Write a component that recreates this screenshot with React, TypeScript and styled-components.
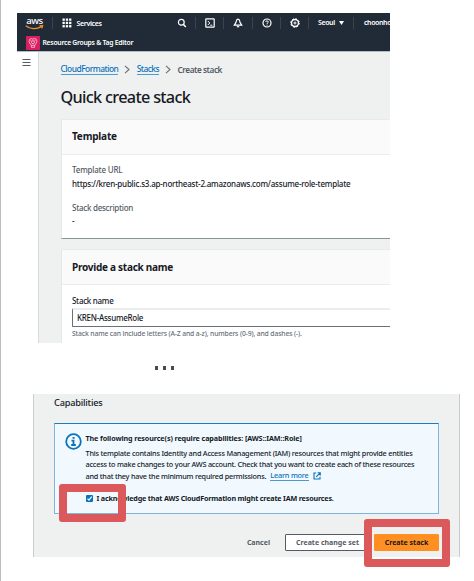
import React from "react";
import styled, { createGlobalStyle } from "styled-components";

const Global = createGlobalStyle`
  * { box-sizing: border-box; }
  body { margin: 0; background: #fff; font-family: "Noto Sans", "Open Sans", sans-serif; }
`;

const Page = styled.main`
  position: relative;
  width: 474px;
  height: 581px;
  padding-top: 13px;
  border-left: 1px solid #b9bdbd;
  overflow: hidden;
`;

const Text = styled.span<{ $size: number; $weight?: number; $color?: string; $ls?: number }>`
  font-size: ${(p) => p.$size}px;
  font-weight: ${(p) => p.$weight ?? 500};
  color: ${(p) => p.$color ?? "#16191f"};
  letter-spacing: ${(p) => p.$ls ?? 0}px;
  white-space: nowrap;
`;

const Console = styled.section`
  width: 372.5px;
  height: 330px;
  margin-left: 16px;
  overflow: hidden;
  display: flex;
  flex-direction: column;
`;

const TopNav = styled.header`
  flex: none;
  height: 39px;
  background: #212b37;
  border-bottom: 1px solid #b4bcc4;
`;

const NavRow = styled.div`
  height: 19px;
  display: flex;
  align-items: center;
  white-space: nowrap;
`;

const ServiceRow = styled(NavRow)`
  padding: 2px 0 0 9px;
  gap: 2.5px;
`;

const NavCell = styled.div<{ $w: number; $pad?: number; $divider?: boolean }>`
  flex: none;
  width: ${(p) => p.$w}px;
  height: 12px;
  padding-left: ${(p) => p.$pad ?? 0}px;
  display: flex;
  align-items: center;
  justify-content: ${(p) => (p.$pad === undefined ? "center" : "flex-start")};
  gap: 4.5px;
  border-right: ${(p) => (p.$divider === false ? "0" : "1px solid #3a4450")};
`;

const Body = styled.div`
  flex: 1;
  min-height: 0;
  display: flex;
`;

const Rail = styled.aside`
  flex: none;
  width: 22px;
  padding: 7px 0 0 5px;
  border-right: 1px solid #d5dbdb;
  svg { display: block; }
`;

const Content = styled.div`
  flex: 1;
  min-width: 0;
  padding: 8px 0 0 21.5px;
  background: #eff1f1;
`;

const Crumbs = styled.nav`
  height: 18px;
  display: flex;
  align-items: center;
  gap: 6.2px;
`;

const Link = styled(Text).attrs({ as: "a" })`
  color: #0972bb;
  border-bottom: 1px solid #4c9ad0;
  line-height: 10px;
`;

const Title = styled.h1`
  height: 41px;
  margin: 0;
  padding-bottom: 4px;
  display: flex;
  align-items: center;
`;

const Card = styled.section<{ $h: number }>`
  height: ${(p) => p.$h}px;
  margin-bottom: 10px;
  background: #fff;
  border-left: 1px solid #e3e8e8;
  border-top: 1px solid #e7ebeb;
  border-bottom: 1px solid #879596;
`;

const CardHeader = styled.div<{ $lift?: number }>`
  height: 35px;
  padding: 0 0 ${(p) => p.$lift ?? 0}px 10.5px;
  display: flex;
  align-items: center;
  background: #fafafa;
  border-bottom: 1px solid #eaeded;
`;

const Field = styled.div<{ $top: number }>`
  padding: ${(p) => p.$top}px 0 0 10.5px;
  display: flex;
  flex-direction: column;
  & > span { line-height: 13.5px; }
`;

const Input = styled.div`
  height: 19px;
  padding-left: 4px;
  display: flex;
  align-items: center;
  border: 1px solid #687078;
  border-top: 2px solid #eaeded;
  border-right: 0;
  border-radius: 1px 0 0 1px;
  margin-bottom: 0.5px;
`;

const Ellipsis = styled.div`
  height: 51px;
  padding: 23px 0 0 154px;
  display: flex;
  gap: 5px;
`;

const Dot = styled.i`
  width: 3px;
  height: 4px;
  background: #4b4b4b;
`;

const Review = styled.section`
  width: 427px;
  height: 163px;
  margin-left: 32px;
  padding: 0 20px;
  background: #eff1f1;
  border-left: 1px solid #c9cdcd;
  border-right: 1px solid #c9cdcd;
`;

const SectionTitle = styled.h2`
  height: 29px;
  margin: 0;
  padding-top: 2px;
  display: flex;
  align-items: flex-start;
  line-height: 13px;
`;

const Alert = styled.div`
  height: 91px;
  padding: 7px 0 0 10px;
  display: flex;
  gap: 3.5px;
  background: #f1f9ff;
  border: 1px solid #7db5dc;
  border-top-color: #1c7cbf;
  & > svg { flex: none; margin-top: 2px; }
`;

const AlertBody = styled.div`
  display: flex;
  flex-direction: column;
`;

const Line = styled.div<{ $h: number }>`
  height: ${(p) => p.$h}px;
  display: flex;
  align-items: center;
  gap: 4px;
`;

const Check = styled.span`
  width: 7px;
  height: 7px;
  background: #0972bb;
  border-radius: 1px;
  display: flex;
`;

const Actions = styled.div`
  padding-top: 20px;
  display: flex;
  justify-content: flex-end;
  align-items: center;
`;

const Button = styled.button<{ $w: number; $primary?: boolean }>`
  width: ${(p) => p.$w}px;
  height: 17px;
  padding: 0;
  margin-left: ${(p) => (p.$primary ? 4 : 15)}px;
  display: flex;
  align-items: center;
  justify-content: center;
  font-family: inherit;
  background: ${(p) => (p.$primary ? "#ff8f21" : "#fff")};
  border: 1px solid ${(p) => (p.$primary ? "#ff8f21" : "#545b64")};
  border-radius: 1px;
`;

const Highlight = styled.div<{ $x: number; $y: number; $w: number; $h: number }>`
  position: absolute;
  left: ${(p) => p.$x}px;
  top: ${(p) => p.$y}px;
  width: ${(p) => p.$w}px;
  height: ${(p) => p.$h}px;
  border: 8px solid #db595b;
  border-radius: 3px;
`;

const AwsLogo = styled.div`
  height: 12px;
  display: flex;
  flex-direction: column;
  align-items: center;
  & > span { line-height: 8px; }
  svg { flex: none; }
`;

const Chevron = () => (
  <svg width="6" height="9" viewBox="0 0 6 9" fill="none" stroke="#687078" strokeWidth="1.1">
    <path d="M1 .8 5 4.5 1 8.2" />
  </svg>
);

const Icon = ({ children }: { children: React.ReactNode }) => (
  <svg width="10" height="10" viewBox="0 0 10 10" fill="none" stroke="#fff" strokeWidth="1.2">
    {children}
  </svg>
);

export default function App() {
  return (
    <>
      <Global />
      <Page>
        <Console>
          <TopNav>
            <NavRow>
              <NavCell $w={36} $pad={8}>
                <AwsLogo>
                  <Text $size={9.6} $weight={500} $color="#fff" $ls={-0.4}>aws</Text>
                  <svg width="19" height="5" viewBox="0 0 19 5" fill="none" stroke="#f4932a" strokeWidth="1.3">
                    <path d="M.8.7C5 4.2 11.5 4.5 16.2 1.8M14.5.8 17.6.7 16.8 3.3" />
                  </svg>
                </AwsLogo>
              </NavCell>
              <NavCell $w={118} $pad={9} $divider={false}>
                <svg width="10" height="10" viewBox="0 0 10 10" fill="#fff">
                  {[0.5, 3.8, 7.1].map((y) => [0.5, 3.8, 7.1].map((x) => (
                    <rect key={`${x}-${y}`} x={x} y={y} width="2.3" height="2.3" />
                  )))}
                </svg>
                <Text $size={7.1} $weight={600} $color="#fff" $ls={-0.4}>Services</Text>
              </NavCell>
              <NavCell $w={25} $pad={6}>
                <Icon><circle cx="4.3" cy="4.2" r="2.9" /><path d="m6.5 6.5 2.3 2.4" strokeWidth="1.5" /></Icon>
              </NavCell>
              <NavCell $w={28}>
                <Icon><rect x=".8" y=".8" width="8.4" height="8.4" rx=".5" /><path d="m2.8 3 2 2-2 2M5.3 7.2h2" strokeWidth="1" /></Icon>
              </NavCell>
              <NavCell $w={29}>
                <Icon><path d="M5 1.2C3.2 1.4 3.3 3.2 3 4.4L1.3 7.1h7.4L7 4.4C6.7 3.2 6.8 1.4 5 1.2Z" /><path d="M3.8 8.7h2.4" /></Icon>
              </NavCell>
              <NavCell $w={28}>
                <Icon><circle cx="5" cy="5" r="4" /><path d="M3.7 4C3.7 2.5 6.3 2.5 6.3 4 6.3 5 5 4.7 5 6M5 6.7v1" strokeWidth="1" /></Icon>
              </NavCell>
              <NavCell $w={28}>
                <Icon><circle cx="5" cy="5" r="3.5" strokeWidth="1.4" /><circle cx="5" cy="5" r="1" strokeWidth="1" /><circle cx="5" cy="5" r="4.3" strokeDasharray="1.6 1.777" strokeWidth="1" /></Icon>
              </NavCell>
              <NavCell $w={45} $pad={9}>
                <Text $size={7} $weight={600} $color="#fff" $ls={-0.4}>Seoul</Text>
                <svg width="5" height="4" viewBox="0 0 5 4" fill="#fff"><path d="M0 0h5L2.5 4Z" /></svg>
              </NavCell>
              <NavCell $w={50} $pad={10} $divider={false}>
                <Text $size={7} $weight={600} $color="#fff" $ls={-0.4}>choonho</Text>
              </NavCell>
            </NavRow>
            <ServiceRow>
              <svg width="14" height="14" viewBox="0 0 14 14">
                <rect width="14" height="14" fill="#d6205f" />
                <g fill="none" stroke="#ffb8d2" strokeWidth=".9">
                  <path d="M3.7 3.2 5.2 2.6 7 3.2 8.8 2.6 10.3 3.2 10.9 5.5 10 7.8 8.7 9v2.3H5.3V9L4 7.8 3.1 5.5Z" />
                  <circle cx="7" cy="6.2" r="1.5" /><path d="M4.5 4.7h1M8.5 4.7h1M5.3 9.3h3.4" />
                </g>
              </svg>
              <Text $size={6.8} $weight={600} $color="#fff" $ls={-0.26}>Resource Groups &amp; Tag Editor</Text>
            </ServiceRow>
          </TopNav>
          <Body>
            <Rail>
              <svg width="9" height="8" viewBox="0 0 9 8" stroke="#545b64" strokeWidth="1"><path d="M.5.5h8M.5 3.5h8M.5 6.5h8" /></svg>
            </Rail>
            <Content>
              <Crumbs>
                <Link $size={8.4} $ls={-0.5}>CloudFormation</Link>
                <Chevron />
                <Link $size={8.4} $ls={-0.5}>Stacks</Link>
                <Chevron />
                <Text $size={8.2} $weight={600} $color="#545b64" $ls={-0.42}>Create stack</Text>
              </Crumbs>
              <Title><Text $size={16.3} $ls={-0.7}>Quick create stack</Text></Title>
              <Card $h={120}>
                <CardHeader $lift={2}><Text $size={10} $weight={700} $ls={-0.2}>Template</Text></CardHeader>
                <Field $top={8}>
                  <Text $size={8} $color="#545b64" $ls={-0.2}>Template URL</Text>
                  <Text $size={8} $ls={-0.22}>https://kren-public.s3.ap-northeast-2.amazonaws.com/assume-role-template</Text>
                </Field>
                <Field $top={10.5}>
                  <Text $size={8} $color="#545b64" $ls={-0.26}>Stack description</Text>
                  <Text $size={8}>-</Text>
                </Field>
              </Card>
              <Card $h={120}>
                <CardHeader><Text $size={10} $weight={700} $ls={-0.26}>Provide a stack name</Text></CardHeader>
                <Field $top={9}>
                  <Text $size={8} $ls={-0.28}>Stack name</Text>
                  <Input><Text $size={8} $ls={-0.27}>KREN-AssumeRole</Text></Input>
                  <Text $size={6.8} $color="#687078" $ls={-0.14}>Stack name can include letters (A-Z and a-z), numbers (0-9), and dashes (-).</Text>
                </Field>
              </Card>
            </Content>
          </Body>
        </Console>
        <Ellipsis><Dot /><Dot /><Dot /></Ellipsis>
        <Review>
          <SectionTitle><Text $size={9.2} $ls={-0.2}>Capabilities</Text></SectionTitle>
          <Alert>
            <svg width="17" height="17" viewBox="0 0 17 17" fill="none" stroke="#0972bb" strokeWidth="1.8">
              <circle cx="8.5" cy="8.5" r="7.3" />
              <path d="M6.5 7.6h2V12M6.2 12h4.6M7.6 4.9h2" />
            </svg>
            <AlertBody>
              <Line $h={14}><Text $size={7.2} $weight={700} $ls={-0.11}>The following resource(s) require capabilities: [AWS::IAM::Role]</Text></Line>
              <Line $h={2} />
              <Line $h={11.5}><Text $size={7.3} $ls={-0.225}>This template contains Identity and Access Management (IAM) resources that might provide entities</Text></Line>
              <Line $h={11.5}><Text $size={7.3} $ls={-0.225}>access to make changes to your AWS account. Check that you want to create each of these resources</Text></Line>
              <Line $h={11.5}>
                <Text $size={7.3} $ls={-0.225}>and that they have the minimum required permissions.</Text>
                <Link $size={7.3} $ls={-0.2}>Learn more</Link>
                <svg width="8" height="8" viewBox="0 0 8 8" fill="none" stroke="#0972bb" strokeWidth="1.1"><path d="M3.2 1H1v6h6V4.8M4.6.7h2.7v2.7M7.2.8 3.2 4.8" /></svg>
              </Line>
              <Line $h={11} />
              <Line $h={11}>
                <Check><svg width="7" height="7" viewBox="0 0 7 7" fill="none" stroke="#fff" strokeWidth="1.2"><path d="m1.5 3.6 1.5 1.5 2.7-3.5" /></svg></Check>
                <Text $size={7.2} $weight={700} $ls={-0.19}>I acknowledge that AWS CloudFormation might create IAM resources.</Text>
              </Line>
            </AlertBody>
          </Alert>
          <Actions>
            <Text $size={7} $weight={700} $color="#545b64">Cancel</Text>
            <Button $w={85}><Text $size={7} $weight={700} $color="#545b64">Create change set</Text></Button>
            <Button $w={65} $primary><Text $size={7} $weight={700}>Create stack</Text></Button>
          </Actions>
        </Review>
        <Highlight $x={58} $y={484} $w={67} $h={38} />
        <Highlight $x={363} $y={519} $w={86} $h={48} />
      </Page>
    </>
  );
}
